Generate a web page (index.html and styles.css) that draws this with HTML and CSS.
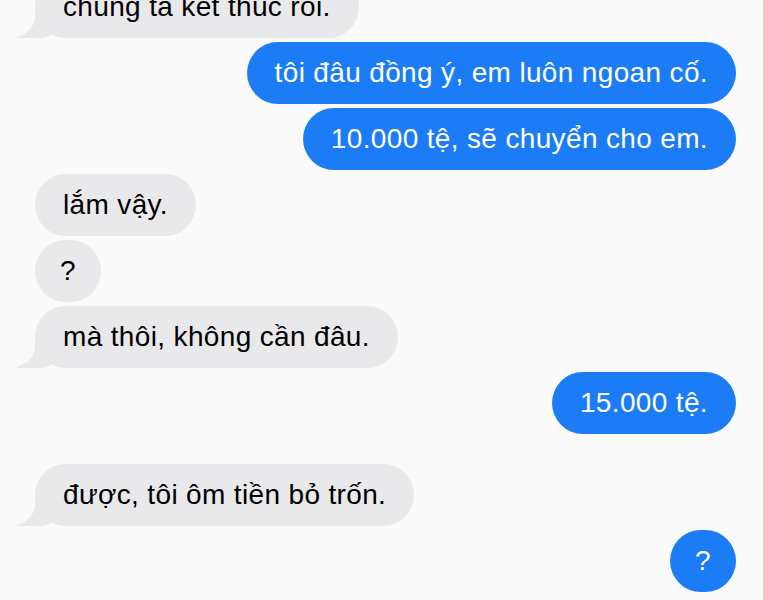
FILE: index.html
```html
<!DOCTYPE html>
<html lang="vi">
<head>
<meta charset="utf-8">
<title>Tin nhắn</title>
<link rel="stylesheet" href="styles.css">
</head>
<body>
<main class="chat">
  <div class="msg in"><span class="bubble tail">chúng ta kết thúc rồi.</span></div>
  <div class="msg out"><span class="bubble">tôi đâu đồng ý, em luôn ngoan cố.</span></div>
  <div class="msg out"><span class="bubble">10.000 tệ, sẽ chuyển cho em.</span></div>
  <div class="msg in"><span class="bubble">lắm vậy.</span></div>
  <div class="msg in"><span class="bubble round">?</span></div>
  <div class="msg in"><span class="bubble tail">mà thôi, không cần đâu.</span></div>
  <div class="msg out"><span class="bubble">15.000 tệ.</span></div>
  <div class="msg in spaced"><span class="bubble tail">được, tôi ôm tiền bỏ trốn.</span></div>
  <div class="msg out"><span class="bubble round">?</span></div>
</main>
</body>
</html>
```
FILE: styles.css
```css
html, body {
  margin: 0;
  padding: 0;
  background: #fafafa;
  overflow: hidden;
}

body {
  font-family: "Liberation Sans", Arial, sans-serif;
  font-size: 28px;
  line-height: 34px;
  color: #000;
}

.chat {
  display: flex;
  flex-direction: column;
  gap: 4px;
  margin-top: -24px;
  padding: 0 27px 0 35px;
}

.msg {
  display: flex;
}

.msg.in {
  justify-content: flex-start;
}

.msg.out {
  justify-content: flex-end;
}

.msg.spaced {
  margin-top: 26px;
}

.bubble {
  position: relative;
  display: block;
  padding: 14px 28px;
  border-radius: 31px;
  letter-spacing: 0.35px;
  white-space: nowrap;
}

.in .bubble {
  background: #e9e9eb;
  color: #000;
}

.out .bubble {
  background: #1b7cf6;
  color: #fff;
}

.bubble.round {
  padding-left: 25px;
  padding-right: 25px;
}

.bubble.tail::before {
  content: "";
  position: absolute;
  left: -18px;
  bottom: 0;
  width: 40px;
  height: 34px;
  background: #e9e9eb;
  border-bottom-right-radius: 16px;
  z-index: -1;
}

.bubble.tail::after {
  content: "";
  position: absolute;
  left: -34px;
  bottom: 2px;
  width: 34px;
  height: 34px;
  background: #fafafa;
  border-bottom-right-radius: 20px;
}

.in .bubble.tail {
  z-index: 0;
}
```
